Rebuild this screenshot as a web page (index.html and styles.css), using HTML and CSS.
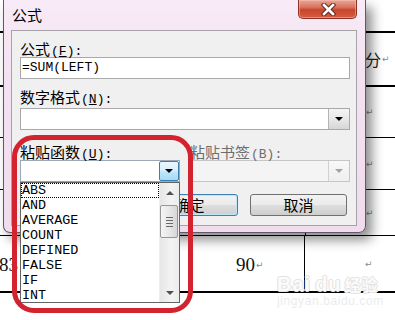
FILE: index.html
```html
<!DOCTYPE html>
<html lang="zh-CN">
<head>
    <meta charset="UTF-8">
    <meta name="viewport" content="width=device-width, initial-scale=1.0">
    <title>公式</title>
    <link rel="stylesheet" href="styles.css">
</head>
<body>
    <div class="page">
        <!-- Word document behind the dialog -->
        <div class="doc">
            <div class="row row-1">
                <div class="cell cell-a"></div>
                <div class="cell cell-b"></div>
                <div class="cell cell-c"><span class="cjk">分</span><span class="pm">↵</span></div>
            </div>
            <div class="row row-2">
                <div class="cell cell-a"></div>
                <div class="cell cell-b"></div>
                <div class="cell cell-c"><span class="pm">↵</span></div>
            </div>
            <div class="row row-3">
                <div class="cell cell-a"></div>
                <div class="cell cell-b"></div>
                <div class="cell cell-c"><span class="pm">↵</span></div>
            </div>
            <div class="row row-4">
                <div class="cell cell-a"></div>
                <div class="cell cell-b"></div>
                <div class="cell cell-c"><span class="pm">↵</span></div>
            </div>
            <div class="row row-5">
                <div class="cell cell-a num">83</div>
                <div class="cell cell-b num">90<span class="pm">↵</span></div>
                <div class="cell cell-c"><span class="pm">↵</span></div>
            </div>
        </div>

        <div class="watermark">
            <div class="wm-brand">Bai<span class="wm-du">du</span><span class="wm-jy">经验</span></div>
            <div class="wm-url">jingyan.baidu.com</div>
        </div>

        <!-- Formula dialog -->
        <div class="dialog">
            <div class="titlebar">
                <span class="title">公式</span>
                <button class="close-btn">
                    <svg width="15" height="13" viewBox="0 0 15 13">
                        <path d="M3 2 L12 11 M12 2 L3 11" stroke="#6a2a20" stroke-width="4.6" stroke-linecap="square"/>
                        <path d="M3 2 L12 11 M12 2 L3 11" stroke="#ffffff" stroke-width="2.6" stroke-linecap="square"/>
                    </svg>
                </button>
            </div>

            <div class="panel">
                <div class="label">公式<span class="ak">(<u>F</u>):</span></div>
                <div class="textbox">=SUM(LEFT)</div>

                <div class="label label-gap">数字格式<span class="ak">(<u>N</u>):</span></div>
                <div class="select">
                    <div class="select-value"></div>
                    <div class="drop-btn"><span class="tri"></span></div>
                </div>

                <div class="pair">
                    <div class="col col-func">
                        <div class="label">粘贴函数<span class="ak">(<u>U</u>):</span></div>
                        <div class="select combo">
                            <div class="select-value"></div>
                            <div class="drop-btn drop-btn-hot"><span class="tri"></span></div>
                        </div>
                        <div class="listbox">
                            <ul class="items">
                                <li class="focused">ABS</li>
                                <li>AND</li>
                                <li>AVERAGE</li>
                                <li>COUNT</li>
                                <li>DEFINED</li>
                                <li>FALSE</li>
                                <li>IF</li>
                                <li>INT</li>
                            </ul>
                            <div class="scrollbar">
                                <div class="sb-arrow"><span class="tri-up"></span></div>
                                <div class="sb-thumb">
                                    <span></span><span></span><span></span><span></span>
                                </div>
                                <div class="sb-track"></div>
                                <div class="sb-arrow"><span class="tri-down"></span></div>
                            </div>
                        </div>
                    </div>
                    <div class="col col-bookmark">
                        <div class="label label-disabled">粘贴书签<span class="ak">(B):</span></div>
                        <div class="select disabled">
                            <div class="select-value"></div>
                            <div class="drop-btn"><span class="tri"></span></div>
                        </div>
                    </div>
                </div>

                <div class="buttons">
                    <button class="btn btn-default">确定</button>
                    <button class="btn">取消</button>
                </div>
            </div>
        </div>

        <div class="highlight"></div>
    </div>
</body>
</html>
```

FILE: styles.css
```css
* {
    margin: 0;
    padding: 0;
    box-sizing: border-box;
}

body {
    font-family: "Noto Sans CJK SC", "Liberation Sans", sans-serif;
    background: #ffffff;
    color: #000;
}

.page {
    position: relative;
    width: 395px;
    height: 320px;
    overflow: hidden;
    background: #ffffff;
}

/* ---------- document table ---------- */

.doc {
    padding-top: 31px;
}

.row {
    display: flex;
    border-top: 1px solid #000;
}

.row-1 {
    border-top-width: 2px;
    height: 54px;
}

.row-2 {
    border-top-width: 2px;
    height: 52px;
}

.row-3 {
    height: 52px;
}

.row-4 {
    height: 46px;
}

.row-5 {
    height: 58px;
    border-bottom: 2px solid #000;
}

.cell {
    display: flex;
    align-items: center;
}

.cell-a {
    width: 190px;
}

.cell-b {
    width: 116px;
    border-right: 1px solid #000;
    padding-left: 47px;
}

.cell-c {
    flex: 1;
    padding-left: 59px;
}

.num {
    font-family: "Liberation Serif", serif;
    font-size: 19px;
    color: #111;
    padding-top: 3px;
}

.cell-a.num {
    margin-left: -1px;
}

.cjk {
    font-size: 16px;
    color: #222;
}

.pm {
    font-family: "DejaVu Sans", sans-serif;
    font-size: 9px;
    color: #8a8a8a;
    margin-left: 1px;
}

/* ---------- watermark ---------- */

.watermark {
    position: absolute;
    left: 277px;
    top: 274px;
    color: #fbfbfb;
    text-shadow: 1px 0 0 #e2e2e2, -1px 0 0 #e2e2e2, 0 1px 0 #e2e2e2, 0 -1px 0 #e2e2e2;
}

.wm-brand {
    font-family: "Liberation Sans", sans-serif;
    font-weight: bold;
    font-size: 20px;
    line-height: 20px;
    letter-spacing: 1px;
}

.wm-du {
    margin-left: 4px;
}

.wm-jy {
    font-family: "Noto Sans CJK SC", sans-serif;
    font-size: 16px;
    margin-left: 3px;
}

.wm-url {
    font-family: "Liberation Sans", sans-serif;
    font-size: 12px;
    line-height: 14px;
    letter-spacing: 0.6px;
    color: #ececec;
    text-shadow: none;
}

/* ---------- dialog ---------- */

.dialog {
    position: absolute;
    left: 3px;
    top: 0;
    width: 363px;
    height: 233px;
    border: 1px solid rgba(50, 40, 60, 0.75);
    border-top: none;
    border-radius: 0 0 7px 7px;
    background: linear-gradient(180deg, #f8eaf6 0%, #f3e0f0 40%, #f1dcee 100%);
    box-shadow: 6px 7px 12px rgba(0, 0, 0, 0.45);
}

.titlebar {
    height: 30px;
    display: flex;
    justify-content: space-between;
    align-items: flex-start;
    padding-left: 8px;
    padding-right: 8px;
}

.title {
    font-size: 15px;
    line-height: 29px;
}

.close-btn {
    width: 59px;
    height: 19px;
    border: 1px solid #8a3426;
    border-top: none;
    border-radius: 0 0 5px 5px;
    background: linear-gradient(180deg, #e7a898 0%, #d9735e 40%, #c8452e 55%, #d65c42 100%);
    box-shadow: inset 0 0 0 1px rgba(255, 200, 190, 0.45);
    display: flex;
    align-items: center;
    justify-content: center;
    padding-top: 1px;
    padding-left: 2px;
}

.panel {
    margin: 0 8px 0 7px;
    height: 196px;
    background: #f0f0f0;
    border: 1px solid #a6a2a8;
    padding: 9px 6px 0 8px;
}

.label {
    font-size: 15px;
    line-height: 17px;
    height: 17px;
    white-space: nowrap;
}

.ak {
    font-family: "Liberation Mono", monospace;
    font-size: 13px;
    margin-left: 1px;
}

.label-gap {
    margin-top: 9px;
}

.label-disabled {
    color: #6d6d6d;
}

.textbox {
    height: 22px;
    background: #fff;
    border: 1px solid #a9a9a9;
    font-family: "Liberation Mono", monospace;
    font-size: 13px;
    line-height: 20px;
    padding-left: 1px;
}

.select {
    margin-top: 3px;
    height: 22px;
    display: flex;
    background: #fff;
    border: 1px solid #a9a9a9;
}

.select-value {
    flex: 1;
}

.drop-btn {
    width: 21px;
    height: 20px;
    border-left: 1px solid #b4b4b4;
    background: linear-gradient(180deg, #f4f4f4 0%, #e8e8e8 50%, #d6d6d6 100%);
    display: flex;
    align-items: center;
    justify-content: center;
}

.tri {
    width: 0;
    height: 0;
    border-left: 4px solid transparent;
    border-right: 4px solid transparent;
    border-top: 4px solid #000;
}

.pair {
    display: flex;
    margin-top: 13px;
}

.col {
    position: relative;
}

.col-func {
    width: 160px;
}

.col-bookmark {
    flex: 1;
    margin-left: 10px;
}

.combo {
    margin-top: 0;
    border-color: #9da8b6;
}

.drop-btn-hot {
    width: 20px;
    border: 1px solid #3c7fb1;
    border-radius: 2px;
    background: linear-gradient(180deg, #eaf6fd 0%, #d9f0fc 45%, #bee6fd 55%, #a7d9f5 100%);
}

.disabled {
    margin-top: 0;
    background: #f4f4f4;
    border-color: #c6c6c6;
}

.disabled .drop-btn {
    border-left-color: #d0d0d0;
    background: linear-gradient(180deg, #f8f8f8 0%, #efefef 100%);
}

.disabled .tri {
    border-top-color: #a3a3a3;
}

/* ---------- open dropdown list ---------- */

.listbox {
    position: absolute;
    left: 0;
    top: 39px;
    width: 160px;
    height: 121px;
    z-index: 2;
    display: flex;
    background: #fff;
    border: 1px solid #646464;
}

.items {
    flex: 1;
    list-style: none;
}

.items li {
    height: 15px;
    font-family: "Liberation Mono", monospace;
    font-size: 13.4px;
    line-height: 15px;
    padding-left: 1px;
    color: #000;
}

.items li.focused {
    outline: 1px dotted #000;
    outline-offset: -1px;
}

.scrollbar {
    width: 20px;
    display: flex;
    flex-direction: column;
    background: linear-gradient(90deg, #e6e6e6 0%, #f3f3f3 60%, #ececec 100%);
    border-left: 1px solid #eeeeee;
}

.sb-arrow {
    height: 19px;
    display: flex;
    align-items: center;
    justify-content: center;
}

.tri-up {
    width: 0;
    height: 0;
    border-left: 4px solid transparent;
    border-right: 4px solid transparent;
    border-bottom: 4px solid #505050;
}

.tri-down {
    width: 0;
    height: 0;
    border-left: 4px solid transparent;
    border-right: 4px solid transparent;
    border-top: 4px solid #505050;
}

.sb-thumb {
    margin: 3px 1px 0 0;
    height: 33px;
    border: 1px solid #979797;
    border-radius: 2px;
    background: linear-gradient(90deg, #f5f5f5 0%, #e8e8e8 50%, #d6d6d6 100%);
    display: flex;
    flex-direction: column;
    justify-content: center;
    align-items: center;
    gap: 2px;
}

.sb-thumb span {
    width: 7px;
    height: 1px;
    background: #6a6a6a;
}

.sb-track {
    flex: 1;
}

/* ---------- buttons ---------- */

.buttons {
    display: flex;
    justify-content: flex-end;
    gap: 12px;
    margin-top: 12px;
    padding-right: 3px;
}

.btn {
    width: 97px;
    height: 22px;
    font-family: "Noto Sans CJK SC", sans-serif;
    font-size: 15px;
    line-height: 18px;
    color: #000;
    border: 1px solid #707070;
    border-radius: 3px;
    background: linear-gradient(180deg, #f2f2f2 0%, #ebebeb 50%, #dddddd 51%, #cfcfcf 100%);
}

.btn-default {
    border-color: #3c7fb1;
    box-shadow: inset 0 0 0 1px #bde6f8;
}

/* ---------- red annotation ---------- */

.highlight {
    position: absolute;
    left: 12px;
    top: 135px;
    width: 181px;
    height: 178px;
    border: 5px solid #d2232e;
    border-radius: 22px;
    z-index: 3;
}
```
